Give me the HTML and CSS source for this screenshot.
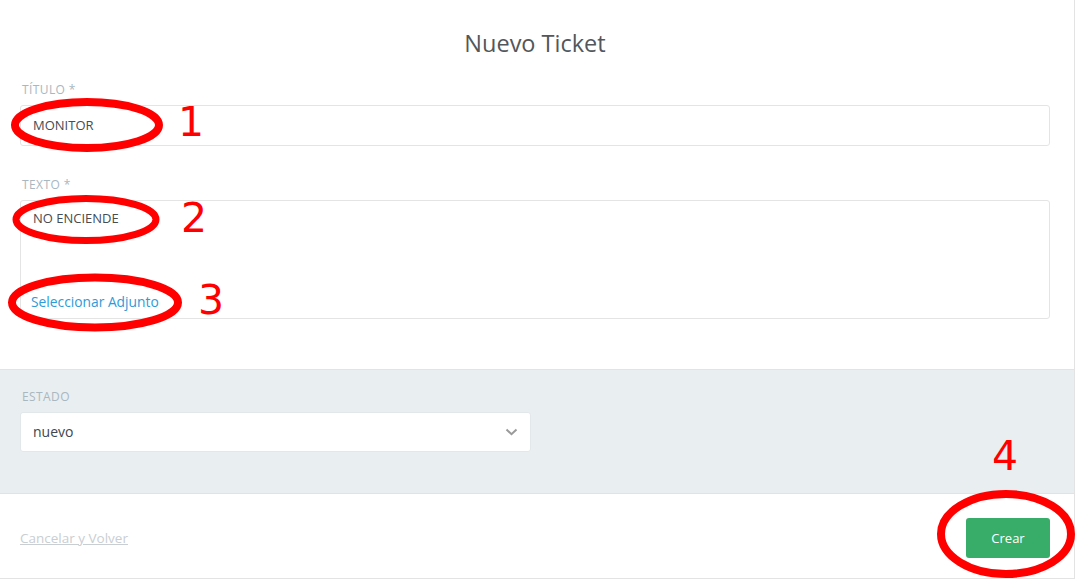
FILE: index.html
```html
<!DOCTYPE html>
<html lang="es">
<head>
<meta charset="utf-8">
<title>Nuevo Ticket</title>
<link rel="stylesheet" href="styles.css">
</head>
<body>
<div class="page">
  <section class="main">
    <h1 class="title">Nuevo Ticket</h1>
    <div class="field">
      <label class="label">Título *</label>
      <div class="input">MONITOR</div>
    </div>
    <div class="field field-text">
      <label class="label">Texto *</label>
      <div class="textarea">
        <div class="ta-text">NO ENCIENDE</div>
        <a class="attach">Seleccionar Adjunto</a>
      </div>
    </div>
  </section>
  <section class="meta">
    <label class="label">Estado</label>
    <div class="select">
      <span>nuevo</span>
      <svg class="chev" width="13" height="8" viewBox="0 0 13 8"><polyline points="1.5,1.5 6.5,6.2 11.5,1.5" fill="none" stroke="#9a9a9a" stroke-width="2"/></svg>
    </div>
  </section>
  <footer class="actions">
    <a class="cancel">Cancelar y Volver</a>
    <button class="btn">Crear</button>
  </footer>
  <svg class="annot" width="1076" height="581" viewBox="0 0 1076 581">
    <g fill="none" stroke="#ff0000">
      <ellipse cx="87" cy="125" rx="72" ry="23" stroke-width="8"/>
      <ellipse cx="86" cy="219.5" rx="70" ry="21" stroke-width="7"/>
      <ellipse cx="95" cy="302.5" rx="83" ry="25" stroke-width="8"/>
      <ellipse cx="1006" cy="534" rx="65" ry="40" stroke-width="8"/>
    </g>
    <g class="nums" fill="#ff0000">
      <text x="191" y="136">1</text>
      <text x="194" y="232">2</text>
      <text x="211" y="314">3</text>
      <text x="1005" y="470">4</text>
    </g>
  </svg>
</div>
</body>
</html>
```

FILE: styles.css
```css
* { box-sizing: border-box; }
html, body { margin: 0; padding: 0; background: #fff; }
body { font-family: "Open Sans", "Noto Sans", sans-serif; color: #454c52; }

.page {
  position: relative;
  width: 1075px;
  border-right: 1px solid #e3e3e3;
}

.main {
  height: 370px;
  padding: 28px 24px 0 20px;
  border-bottom: 1px solid #dfe4e7;
}

.title {
  margin: 0;
  font-size: 23.5px;
  line-height: 30px;
  font-weight: 400;
  color: #53575a;
  text-align: center;
}

.field { display: flex; flex-direction: column; margin-top: 24px; }
.field-text { margin-top: 31px; }

.label {
  display: block;
  font-size: 12px;
  line-height: 16px;
  text-transform: uppercase;
  letter-spacing: 0.4px;
  color: #a9b7c0;
  margin-left: 2px;
  margin-bottom: 7px;
}

.input {
  height: 41px;
  border: 1px solid #e4e4e4;
  border-radius: 3px;
  display: flex;
  align-items: center;
  padding: 0 11px 1px 12px;
  font-size: 13px;
}

.textarea {
  height: 119px;
  border: 1px solid #e4e4e4;
  border-radius: 3px;
  padding: 7px 11px 7px 10px;
  display: flex;
  flex-direction: column;
  justify-content: space-between;
}
.ta-text { font-size: 13px; line-height: 20px; padding-left: 2px; }
.attach {
  font-size: 13.8px;
  line-height: 18px;
  color: #2e9bd8;
}

.meta {
  height: 124px;
  background: #e9eef1;
  padding: 19px 24px 0 20px;
  border-bottom: 1px solid #dfe3e6;
}

.select {
  width: 511px;
  height: 40px;
  background: #fff;
  border: 1px solid #e2e7ea;
  border-radius: 3px;
  display: flex;
  align-items: center;
  justify-content: space-between;
  padding: 0 12px 1px 12px;
  font-size: 14px;
  color: #40474d;
}

.actions {
  height: 85px;
  padding: 24px 24px 0 20px;
  border-bottom: 1px solid #e3e3e3;
  display: flex;
  align-items: flex-start;
  justify-content: space-between;
}

.cancel {
  font-size: 13.5px;
  line-height: 40px;
  color: #c9ced2;
  text-decoration: underline;
}

.btn {
  width: 84px;
  height: 40px;
  border: 0;
  border-radius: 3px;
  background: #38ad69;
  color: #fff;
  font-family: "Open Sans", "Noto Sans", sans-serif;
  font-size: 13px;
  padding: 0;
}

.annot {
  position: absolute;
  left: 0;
  top: 0;
  pointer-events: none;
}
.nums text {
  font-family: "DejaVu Sans", sans-serif;
  font-size: 41px;
  text-anchor: middle;
}
```
